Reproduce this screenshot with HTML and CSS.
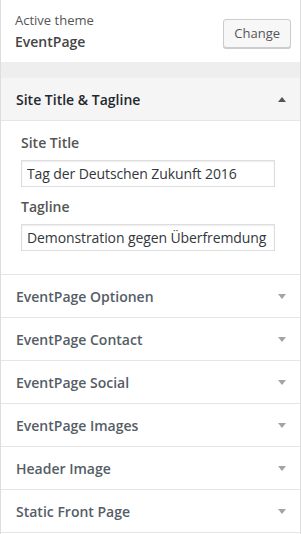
FILE: index.html
```html
<!DOCTYPE html>
<html lang="en">
<head>
    <meta charset="UTF-8">
    <meta name="viewport" content="width=device-width, initial-scale=1.0">
    <title>Customize</title>
    <link rel="stylesheet" href="styles.css">
</head>
<body>
    <div class="panel">
        <div class="theme-info">
            <div class="theme-text">
                <span class="notice">Active theme</span>
                <strong class="theme-name">EventPage</strong>
            </div>
            <button class="change-btn">Change</button>
        </div>
        <div class="spacer"></div>

        <div class="section open">
            <h3 class="section-title">Site Title &amp; Tagline <span class="arrow up"></span></h3>
            <div class="section-content">
                <label class="control-title" for="site-title">Site Title</label>
                <input id="site-title" type="text" value="Tag der Deutschen Zukunft 2016">
                <label class="control-title" for="tagline">Tagline</label>
                <input id="tagline" type="text" value="Demonstration gegen Überfremdung">
            </div>
        </div>

        <div class="section"><h3 class="section-title">EventPage Optionen <span class="arrow"></span></h3></div>
        <div class="section"><h3 class="section-title">EventPage Contact <span class="arrow"></span></h3></div>
        <div class="section"><h3 class="section-title">EventPage Social <span class="arrow"></span></h3></div>
        <div class="section"><h3 class="section-title">EventPage Images <span class="arrow"></span></h3></div>
        <div class="section"><h3 class="section-title">Header Image <span class="arrow"></span></h3></div>
        <div class="section"><h3 class="section-title">Static Front Page <span class="arrow"></span></h3></div>
    </div>
</body>
</html>
```

FILE: styles.css
```css
/* General */
body {
    margin: 0;
    font-family: 'Open Sans', sans-serif;
    color: #555;
    background: #fff;
}

.panel {
    width: 301px;
    height: 534px;
    box-sizing: border-box;
    border-left: 1px solid #ddd;
    border-right: 1px solid #ddd;
    overflow: hidden;
    background: #fff;
}

/* Active theme block */
.theme-info {
    display: flex;
    align-items: center;
    justify-content: space-between;
    height: 62px;
    box-sizing: border-box;
    padding: 0 9px 0 14px;
}

.theme-text {
    display: flex;
    flex-direction: column;
}

.notice {
    font-size: 13px;
    line-height: 20px;
    color: #555;
}

.theme-name {
    font-size: 14px;
    line-height: 20px;
    font-weight: 600;
    color: #444;
    margin-top: 2px;
}

.change-btn {
    font-family: inherit;
    font-size: 13px;
    color: #555;
    background: #f7f7f7;
    border: 1px solid #ccc;
    border-radius: 3px;
    box-shadow: 0 1px 0 #ccc;
    height: 29px;
    padding: 0 10px;
    margin-top: 4px;
}

.spacer {
    height: 16px;
    background: #eee;
}

/* Sections */
.section {
    border-bottom: 1px solid #e5e5e5;
}

.section-title {
    display: flex;
    align-items: center;
    justify-content: space-between;
    height: 42px;
    margin: 0;
    padding: 0 14px 0 15px;
    font-size: 14px;
    font-weight: 600;
    color: #555d66;
}

.open .section-title {
    background: #f5f5f5;
    color: #23282d;
    border-bottom: 1px solid #e5e5e5;
}

.arrow {
    width: 0;
    height: 0;
    border-left: 4px solid transparent;
    border-right: 4px solid transparent;
    border-top: 5px solid #a0a5aa;
}

.arrow.up {
    border-top: none;
    border-bottom: 5px solid #555;
}

.section-content {
    padding: 12px 25px 23px 20px;
}

.control-title {
    display: block;
    font-size: 14px;
    font-weight: 600;
    line-height: 20px;
    color: #555;
}

.section-content input {
    display: block;
    width: 100%;
    box-sizing: border-box;
    height: 27px;
    margin: 7px 0 10px;
    padding: 0 2px 0 5px;
    font-family: inherit;
    font-size: 14px;
    letter-spacing: -0.1px;
    color: #32373c;
    border: 1px solid #ddd;
    box-shadow: inset 0 1px 2px rgba(0, 0, 0, 0.07);
    outline: none;
}

.section-content input:last-child {
    margin-bottom: 0;
}
```
